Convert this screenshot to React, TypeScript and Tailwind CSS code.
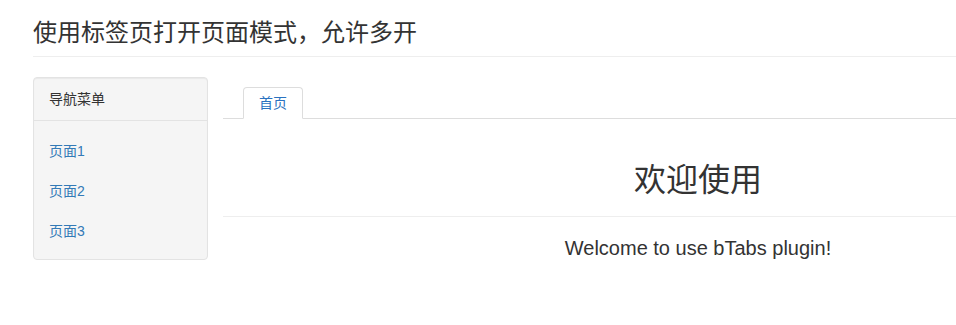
export default function App() {
  const font = { fontFamily: '"Liberation Sans", "Noto Sans CJK SC", Arial, sans-serif' };
  return (
    <div className="w-[956px] h-[325px] overflow-hidden bg-white text-[#333]" style={font}>
      <div className="pl-[33px]">
        <div className="pt-[20px] pb-[10px] border-b border-[#eee] w-[1200px]">
          <h3 className="text-[24px] leading-[26px] font-normal m-0">使用标签页打开页面模式，允许多开</h3>
        </div>
        <div className="flex mt-[20px]">
          <div className="w-[175px] h-[183px] shrink-0 bg-[#f5f5f5] border border-[#e3e3e3] rounded-[4px] shadow-[inset_0_1px_1px_rgba(0,0,0,0.05)]">
            <div className="h-[43px] flex items-center px-[15px] border-b border-[#e3e3e3] text-[14px] leading-[20px]">
              导航菜单
            </div>
            <div className="pt-[10px] pb-[8px]">
              {['页面1', '页面2', '页面3'].map((t) => (
                <div key={t} className="h-[40px] flex items-center px-[15px] text-[14px] leading-[20px] text-[#337ab7]">
                  {t}
                </div>
              ))}
            </div>
          </div>
          <div className="ml-[15px] w-[950px] shrink-0">
            <div className="mt-[10px] flex border-b border-[#ddd] pl-[20px]">
              <div className="-mb-px h-[32px] px-[15px] flex items-center border border-[#ddd] border-b-white bg-white rounded-t-[4px] text-[14px] leading-[20px] text-[#2a72c0]">
                首页
              </div>
            </div>
            <div className="text-center">
              <h1 className="text-[32px] leading-[36px] font-normal mt-[43px] pb-[18px] border-b border-[#eee]">欢迎使用</h1>
              <p className="text-[20px] leading-[26px] mt-[18px]">Welcome to use bTabs plugin!</p>
            </div>
          </div>
        </div>
      </div>
    </div>
  );
}
